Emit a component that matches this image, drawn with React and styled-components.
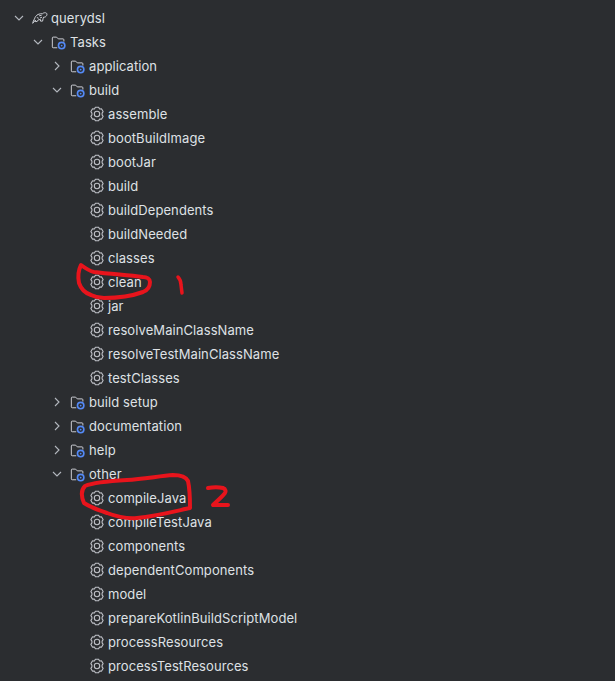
import styled, { createGlobalStyle } from 'styled-components'

const tree = [
  { depth: 0, title: 'querydsl', kind: 'project', open: true },
  { depth: 1, title: 'Tasks', kind: 'folder', open: true },
  { depth: 2, title: 'application', kind: 'folder' },
  { depth: 2, title: 'build', kind: 'folder', open: true },
  { depth: 3, title: 'assemble' },
  { depth: 3, title: 'bootBuildImage' },
  { depth: 3, title: 'bootJar' },
  { depth: 3, title: 'build' },
  { depth: 3, title: 'buildDependents' },
  { depth: 3, title: 'buildNeeded' },
  { depth: 3, title: 'classes' },
  { depth: 3, title: 'clean' },
  { depth: 3, title: 'jar' },
  { depth: 3, title: 'resolveMainClassName' },
  { depth: 3, title: 'resolveTestMainClassName' },
  { depth: 3, title: 'testClasses' },
  { depth: 2, title: 'build setup', kind: 'folder' },
  { depth: 2, title: 'documentation', kind: 'folder' },
  { depth: 2, title: 'help', kind: 'folder' },
  { depth: 2, title: 'other', kind: 'folder', open: true },
  { depth: 3, title: 'compileJava' },
  { depth: 3, title: 'compileTestJava' },
  { depth: 3, title: 'components' },
  { depth: 3, title: 'dependentComponents' },
  { depth: 3, title: 'model' },
  { depth: 3, title: 'prepareKotlinBuildScriptModel' },
  { depth: 3, title: 'processResources' },
  { depth: 3, title: 'processTestResources' },
]

const Chevron = ({ open }) => (
  <svg width="12" height="12" viewBox="0 0 12 12" fill="none" stroke="#b4b8bf" strokeWidth="1.1">
    <path d={open ? 'M2 4l4 4 4-4' : 'M4 2l4 4-4 4'} />
  </svg>
)

const Gear = () => (
  <svg width="16" height="16" viewBox="0 0 16 16" fill="none" stroke="#bfc1c7" strokeWidth="1.1" strokeLinejoin="round">
    <path d="M6.400 1.300h3.200l1 1.700 2-.1 1.500 2.700-1 1.500v1.800l1 1.500-1.500 2.700-2-.1-1 1.700H6.400l-1-1.700-2 .1-1.500-2.700 1-1.500V7.100l-1-1.500 1.500-2.700 2 .1z" />
    <circle cx="8" cy="8" r="2.700" />
  </svg>
)

const Folder = () => (
  <svg width="18" height="18" viewBox="0 0 18 18" fill="none">
    <path d="M7 15.500H2.500a1 1 0 0 1-1-1v-10a1 1 0 0 1 1-1h3.800l1.900 2h5.300a1 1 0 0 1 1 1v2" stroke="#ced0d6" strokeWidth="1.100" />
    <circle cx="12" cy="13" r="3.600" stroke="#548af7" strokeWidth="1.800" />
    <circle cx="12" cy="13" r="1" fill="#548af7" />
  </svg>
)

const Elephant = () => (
  <svg width="18" height="18" viewBox="0 0 18 18" fill="none" stroke="#ced0d6" strokeWidth="1.100" strokeLinejoin="round">
    <path d="M.8 15c.2-2 1-3.500 2-5 .7-2.300 2-4 4-5 1.700-.7 3.500-1 5-.8C13 3 15 2.700 16.200 3.500c1 .8.700 2.500-.3 3.500-.8.900-1.800 1.200-2.700 1l-.6 1.200-.7 3.300H9.600l-.1-1.800-2.500.4-1.200 1.900H3.600l.3-1.700z" />
    <path d="M5.500 8.500l2 .8M9 9l2.200-.9M8 6.500l2.800-.5" />
  </svg>
)

const Marks = () => (
  <MarkLayer viewBox="0 0 615 681" fill="none" stroke="#e8141c" strokeLinecap="round" strokeLinejoin="round">
    <path strokeWidth="4" d="M81 265c-3 6-3 13-2 18 2 6 6 10 12 12 4 2 9 3 13 3 14 0 28-2 39-6 5-2 7-6 7-10 0-3-3-5-7-5-17-2-33-3-49-5-5-1-9-4-13-7z" />
    <path strokeWidth="3.500" d="M178 277c2 2 3 5 3 8l1 8" />
    <path strokeWidth="4" d="M84 503c-3-7-3-13 1-17 7-3 24-5 42-6 16-1 33-4 46-5 7 0 13 2 15 6 2 9 2 18 2 27-10 2-32 8-53 10-11 1-22-2-30-5-9-3-17-6-23-10z" />
    <path strokeWidth="4" d="M208 488c5-1 11-1 15 0 3 1 3 4 2 5-3 4-8 8-12 12 5 0 10 0 15 0" />
  </MarkLayer>
)

export default function App() {
  return (
    <Panel>
      <GlobalStyle />
      {tree.map(({ depth, title, kind, open }, i) => (
        <Row key={i} $depth={depth}>
          <Toggle>{kind && <Chevron open={open} />}</Toggle>
          <IconSlot>
            {kind === 'project' && <Elephant />}
            {kind === 'folder' && <Folder />}
            {!kind && <Gear />}
          </IconSlot>
          <Label>{title}</Label>
        </Row>
      ))}
      <Marks />
    </Panel>
  )
}

const GlobalStyle = createGlobalStyle`
  html, body {
    margin: 0;
    background: #2b2d30;
  }
`

const Panel = styled.div`
  position: relative;
  width: 615px;
  height: 681px;
  overflow: hidden;
  padding-top: 6px;
  box-sizing: border-box;
  background: #2b2d30;
  font-family: Inter, "Noto Sans", sans-serif;
  font-size: 13px;
  letter-spacing: 0.08px;
  color: #dfe1e5;
`

const Row = styled.div`
  display: flex;
  align-items: center;
  height: 24px;
  padding-left: ${({ $depth }) => 13 + 19 * $depth}px;
`

const Toggle = styled.span`
  display: flex;
  width: 12px;
  height: 12px;
  margin-right: 7px;
`

const IconSlot = styled.span`
  display: flex;
  align-items: center;
  width: 16px;
  height: 18px;
  margin-right: 3px;
`

const Label = styled.span`
  white-space: nowrap;
`

const MarkLayer = styled.svg`
  position: absolute;
  top: 0;
  left: 0;
  width: 615px;
  height: 681px;
  pointer-events: none;
`
